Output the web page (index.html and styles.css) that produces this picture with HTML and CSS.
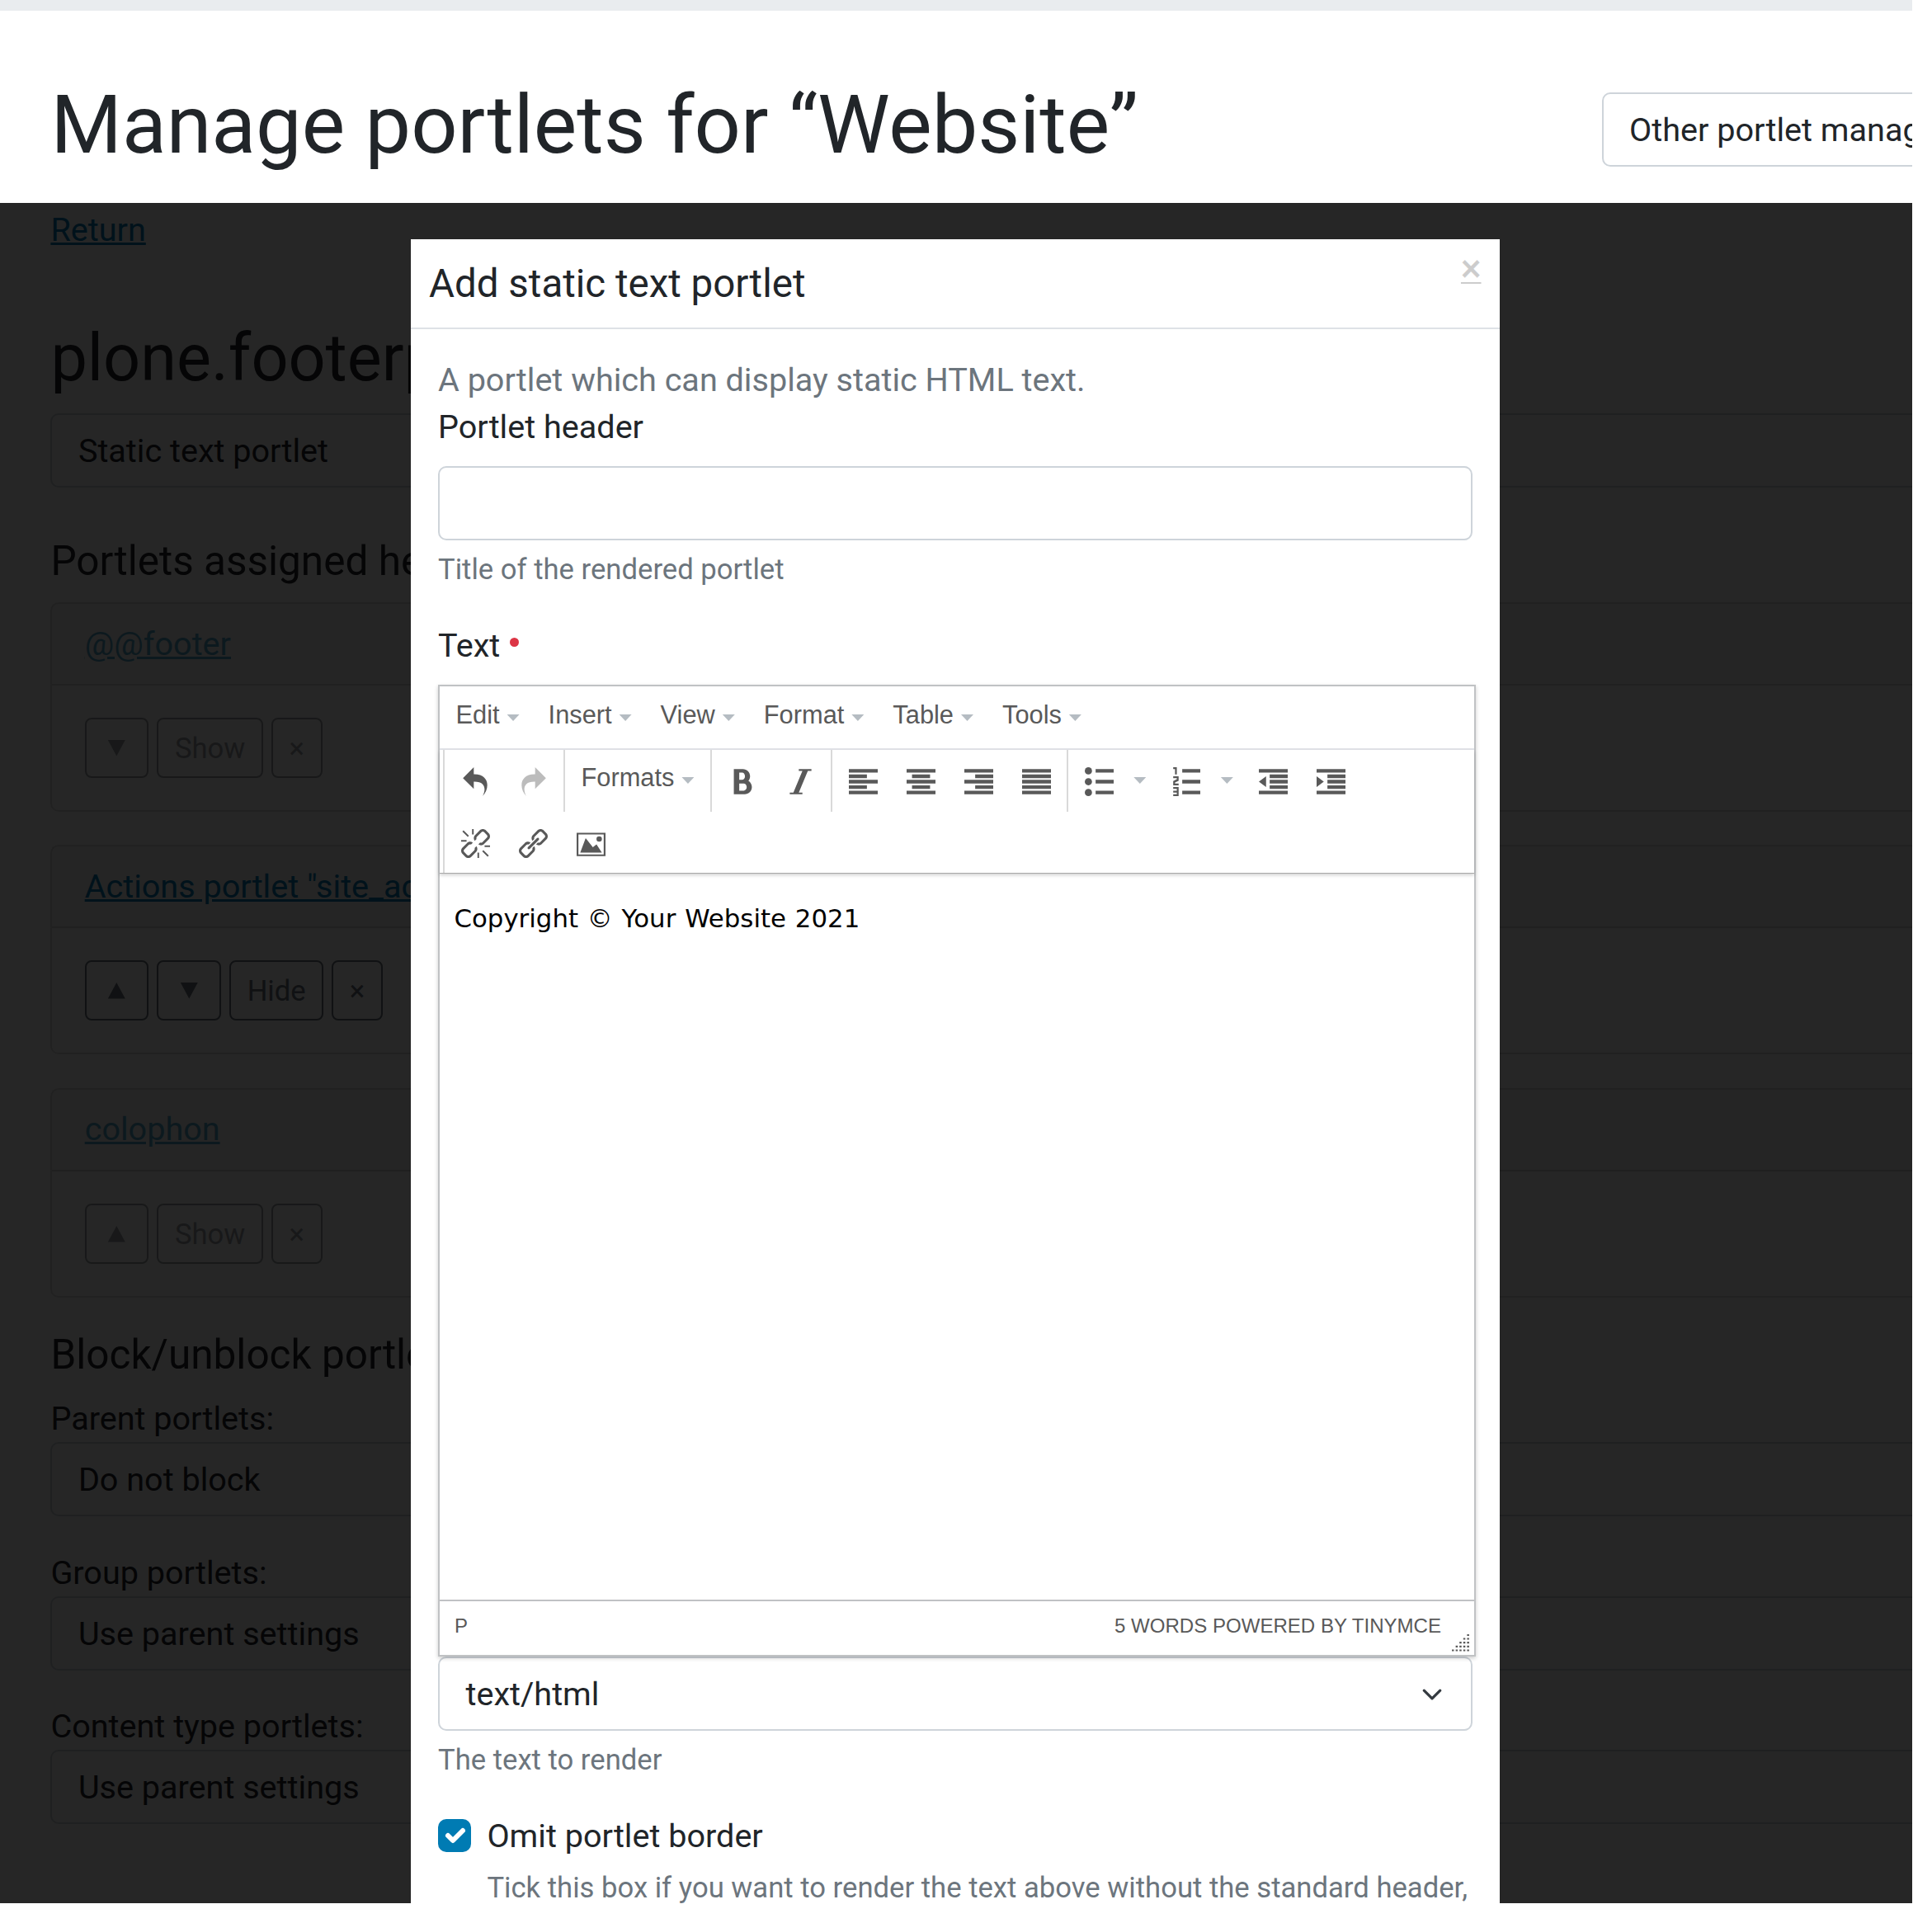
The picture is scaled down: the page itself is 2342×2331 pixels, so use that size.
FILE: index.html
```html
<!DOCTYPE html>
<html lang="en">
<head>
<meta charset="utf-8">
<title>Manage portlets</title>
<link rel="stylesheet" href="styles.css">
</head>
<body>
<svg class="defs" aria-hidden="true">
  <symbol id="undo" viewBox="0 0 1024 1024"><path d="M761.862 1024c113.726-206.032 132.888-520.306-313.862-509.824v253.824l-384-384 384-384v248.372c534.962-13.942 594.57 472.214 313.862 775.628z"/></symbol>
  <symbol id="redo" viewBox="0 0 1024 1024"><path d="M576 248.372v-248.372l384 384-384 384v-253.824c-446.75-10.482-427.588 303.792-313.86 509.824-280.712-303.414-221.1-789.57 313.86-775.628z"/></symbol>
  <symbol id="bold" viewBox="0 0 1024 1024"><path d="M707.88 484.652c37.498-44.542 60.12-102.008 60.12-164.652 0-141.16-114.842-256-256-256h-320v896h384c141.158 0 256-114.842 256-256 0-92.956-49.798-174.496-124.12-219.348zM384 192h101.5c55.968 0 101.5 57.42 101.5 128s-45.532 128-101.5 128h-101.5v-256zM543 832h-159v-256h159c58.45 0 106 57.42 106 128s-47.55 128-106 128z"/></symbol>
  <symbol id="italic" viewBox="0 0 1024 1024"><path d="M896 64v64h-128l-320 768h128v64h-448v-64h128l320-768h-128v-64z"/></symbol>
  <symbol id="left" viewBox="0 0 16 16"><path d="M0 1h16v2H0zM0 4h10v2H0zM0 7h16v2H0zM0 10h10v2H0zM0 13h16v2H0z"/></symbol>
  <symbol id="center" viewBox="0 0 16 16"><path d="M0 1h16v2H0zM3 4h10v2H3zM0 7h16v2H0zM3 10h10v2H3zM0 13h16v2H0z"/></symbol>
  <symbol id="right" viewBox="0 0 16 16"><path d="M0 1h16v2H0zM6 4h10v2H6zM0 7h16v2H0zM6 10h10v2H6zM0 13h16v2H0z"/></symbol>
  <symbol id="justify" viewBox="0 0 16 16"><path d="M0 1h16v2H0zM0 4h16v2H0zM0 7h16v2H0zM0 10h16v2H0zM0 13h16v2H0z"/></symbol>
  <symbol id="bullets" viewBox="0 0 16 16"><circle cx="2" cy="2" r="2"/><circle cx="2" cy="8" r="2"/><circle cx="2" cy="14" r="2"/><path d="M6 1h10v2H6zM6 7h10v2H6zM6 13h10v2H6z"/></symbol>
  <symbol id="numbers" viewBox="0 0 16 16"><path d="M6 1h10v2H6zM6 7h10v2H6zM6 13h10v2H6zM3 0v4H2V1H1V0zM2 8.500v.5h2v1H1V7.600l2-1v-.6H1V5h3v2.500zM4 11v5H1v-1h2v-1H1v-1h2v-1H1v-1z"/></symbol>
  <symbol id="outdent" viewBox="0 0 16 16"><path d="M0 1h16v2H0zM6 4h10v2H6zM6 7h10v2H6zM6 10h10v2H6zM0 13h16v2H0zM4 5v6L0 8z"/></symbol>
  <symbol id="indent" viewBox="0 0 16 16"><path d="M0 1h16v2H0zM6 4h10v2H6zM6 7h10v2H6zM6 10h10v2H6zM0 13h16v2H0zM0 5v6l4-3z"/></symbol>
  <symbol id="chain" viewBox="0 0 1024 1024"><path d="M476.888 675.112c4.56 9.048 6.99 19.158 6.99 29.696 0 17.616-6.744 34.06-18.992 46.308l-163.382 163.38c-12.248 12.248-28.694 18.992-46.308 18.992s-34.060-6.744-46.308-18.992l-99.382-99.382c-12.248-12.248-18.992-28.694-18.992-46.308s6.744-34.060 18.992-46.308l163.382-163.382c12.248-12.248 28.694-18.994 46.308-18.994 10.536 0 20.644 2.43 29.696 6.99l65.338-65.338c-27.87-21.41-61.44-32.16-95.034-32.16-39.986 0-79.972 15.166-110.308 45.502l-163.38 163.382c-60.67 60.67-60.67 159.948 0 220.618l99.382 99.382c30.334 30.332 70.32 45.5 110.306 45.5 39.988 0 79.974-15.168 110.308-45.502l163.382-163.38c55.82-55.82 60.238-144.298 13.344-205.346zM978.498 144.884l-99.382-99.382c-30.334-30.336-70.32-45.502-110.308-45.502-39.986 0-79.972 15.166-110.308 45.502l-163.382 163.382c-55.82 55.82-60.238 144.298-13.342 205.342l65.338-65.34c-4.558-9.05-6.988-19.16-6.988-29.694 0-17.616 6.744-34.060 18.992-46.308l163.382-163.382c12.246-12.248 28.694-18.994 46.308-18.994s34.060 6.746 46.308 18.994l99.382 99.382c12.248 12.248 18.992 28.694 18.992 46.308s-6.744 34.060-18.992 46.308l-163.38 163.382c-12.248 12.248-28.694 18.992-46.308 18.992-10.536 0-20.644-2.43-29.696-6.99l-65.338 65.338c27.872 21.41 61.44 32.16 95.034 32.16 39.988 0 79.974-15.168 110.308-45.502l163.38-163.38c60.672-60.67 60.672-159.948 0-220.618z"/></symbol>
  <symbol id="up" viewBox="0 0 34 20"><path d="M17 0l10.500 19.500h-21z"/></symbol>
  <symbol id="down" viewBox="0 0 34 20"><path d="M17 19.500l10.500-19.500h-21z"/></symbol>
</svg>
<div class="page">
  <header class="top">
    <h1>Manage portlets for “Website”</h1>
    <div class="select manager">Other portlet managers</div>
  </header>
  <main class="stage">
    <div class="content">
      <a class="return">Return</a>
      <h2>plone.footerportlets</h2>
      <div class="select">Static text portlet</div>
      <h3>Portlets assigned here</h3>
      <section class="card muted">
        <div class="card-head"><a>@@footer</a></div>
        <div class="card-body"><span class="btn"><svg><use href="#down"/></svg></span><span class="btn">Show</span><span class="btn">×</span></div>
      </section>
      <section class="card">
        <div class="card-head"><a>Actions portlet "site_actions"</a></div>
        <div class="card-body"><span class="btn"><svg><use href="#up"/></svg></span><span class="btn"><svg><use href="#down"/></svg></span><span class="btn">Hide</span><span class="btn">×</span></div>
      </section>
      <section class="card muted">
        <div class="card-head"><a>colophon</a></div>
        <div class="card-body"><span class="btn"><svg><use href="#up"/></svg></span><span class="btn">Show</span><span class="btn">×</span></div>
      </section>
      <h3 class="block-title">Block/unblock portlets</h3>
      <label>Parent portlets:</label>
      <div class="select">Do not block</div>
      <label>Group portlets:</label>
      <div class="select">Use parent settings</div>
      <label>Content type portlets:</label>
      <div class="select">Use parent settings</div>
    </div>
    <div class="backdrop"></div>
    <div class="modal">
      <div class="modal-head"><h4>Add static text portlet</h4><a class="close">×</a></div>
      <div class="modal-body">
        <p class="intro">A portlet which can display static HTML text.</p>
        <div class="field-label">Portlet header</div>
        <div class="select"></div>
        <p class="help">Title of the rendered portlet</p>
        <div class="field-label text-label">Text<i class="required"></i></div>
        <div class="editor">
          <div class="menubar">
            <span>Edit<i class="caret"></i></span><span>Insert<i class="caret"></i></span><span>View<i class="caret"></i></span><span>Format<i class="caret"></i></span><span>Table<i class="caret"></i></span><span>Tools<i class="caret"></i></span>
          </div>
          <div class="toolbar">
            <div class="row">
              <div class="group"><b><svg><use href="#undo"/></svg></b><b class="off"><svg><use href="#redo"/></svg></b></div>
              <div class="group formats"><span>Formats<i class="caret"></i></span></div>
              <div class="group"><b><svg><use href="#bold"/></svg></b><b><svg><use href="#italic"/></svg></b></div>
              <div class="group"><b><svg><use href="#left"/></svg></b><b><svg><use href="#center"/></svg></b><b><svg><use href="#right"/></svg></b><b><svg><use href="#justify"/></svg></b></div>
              <div class="group"><b class="split"><svg><use href="#bullets"/></svg><i class="caret"></i></b><b class="split"><svg><use href="#numbers"/></svg><i class="caret"></i></b><b><svg><use href="#outdent"/></svg></b><b><svg><use href="#indent"/></svg></b></div>
            </div>
            <div class="row">
              <div class="group">
                <b><svg viewBox="0 0 16 16"><use href="#chain" width="16" height="16"/><path class="ticks" d="M6.500 0v3M0 6.500h3M1 1l3 3M9.500 13v3M13 9.500h3M12 12l3 3"/></svg></b>
                <b><svg viewBox="0 0 1024 1024"><use href="#chain" width="1024" height="1024"/><path d="M320 704c17.6 17.6 47.274 16.726 65.942-1.942l316.118-316.116c18.668-18.668 19.54-48.342 1.94-65.942s-47.274-16.726-65.942 1.942l-316.116 316.116c-18.668 18.668-19.542 48.342-1.942 65.942z"/></svg></b>
                <b><svg viewBox="0 0 1024 1024"><path fill-rule="evenodd" d="M0 128v832h1024v-832zM960 896h-896v-704h896z"/><circle cx="800" cy="352" r="96"/><path d="M896 832h-768l192-512 256 320 128-96z"/></svg></b>
              </div>
            </div>
          </div>
          <div class="document">Copyright © Your Website 2021</div>
          <div class="status"><span>P</span><span class="words">5 WORDS POWERED BY TINYMCE</span>
            <svg class="grip" viewBox="0 0 21 21"><path d="M0 19.500H21M4.600 14.800H21M9.200 10.200H21M13.800 5.500H21M18.400 1H21"/></svg>
          </div>
        </div>
        <div class="select format">text/html<svg class="chevron" viewBox="0 0 16 16"><path d="M2 5l6 6 6-6"/></svg></div>
        <p class="help">The text to render</p>
        <div class="check">
          <svg class="box" viewBox="0 0 20 20"><path d="M6 10l3 3l6-6"/></svg>
          <div><div class="field-label">Omit portlet border</div>
          <p class="help">Tick this box if you want to render the text above without the standard header,</p></div>
        </div>
      </div>
    </div>
  </main>
</div>
</body>
</html>
```
FILE: styles.css
```css
* { box-sizing: border-box; }
body { margin: 0; background: #fff; }
h1, h2, h3, h4, p { margin: 0; font-weight: 400; }
.defs { display: none; }
.page {
  width: 2318px; height: 2307px; overflow: hidden;
  font: 39.6px/59px Roboto, sans-serif; color: #212529;
}
.top {
  height: 246px; border-top: 13px solid #e9ecef; padding: 79px 0 0 61.6px;
  display: flex; align-items: flex-start; white-space: nowrap;
}
.top h1 { width: 1880px; flex: none; font-size: 98.900px; line-height: 118px; }
.select {
  height: 90px; padding: 14px 31.500px; border: 2px solid #ced4da; border-radius: 10px;
  line-height: 60px; white-space: nowrap;
}
.manager { flex: none; width: 560px; margin-top: 20px; }
.stage { position: relative; height: 2061px; overflow: hidden; }
.content { width: 2500px; padding: 3px 0 0 61.400px; }
a { color: #007bb3; text-decoration: underline; }
.return { display: block; }
h2 { margin-top: 79px; margin-bottom: 19px; font-size: 79.2px; line-height: 95px; }
h3 { margin: 60px 0 20px; font-size: 49.5px; line-height: 59px; }
.card { height: 254px; margin-bottom: 40.4px; border: 2px solid rgba(0,0,0,.125); border-radius: 10px; }
.card-head { height: 99px; padding: 18.500px 39.300px; background: rgba(0,0,0,.03); border-bottom: 2px solid rgba(0,0,0,.125); }
.card-body { display: flex; gap: 9.900px; padding: 39px 39.300px; }
.btn {
  height: 73px; padding: 9px 19.600px; border: 2px solid #6c757d; border-radius: 8px;
  color: #6c757d; font-size: 34.650px; line-height: 52px;
}
.btn svg { display: block; width: 34.600px; height: 20px; margin-top: 16px; fill: currentColor; }
.muted a, .muted .btn { opacity: .65; }
.block-title { margin: 40px 0 18px; }
label { display: block; height: 58px; }
label + .select { margin-bottom: 38.500px; }
.backdrop { position: absolute; inset: 0; background: rgba(0,0,0,.85); }

.modal { position: absolute; left: 498px; top: 44px; width: 1320px; height: 2100px; background: #fff; }
.modal-head {
  display: flex; justify-content: space-between; height: 109px; padding: 26px 22.500px 0 22px;
  border-bottom: 2px solid #dee2e6;
}
h4 { font-size: 47.500px; line-height: 57px; }
.close { margin-top: -18px; font-size: 46px; line-height: 54px; color: #ccc; text-decoration-thickness: 2px; -webkit-text-stroke: .5px #ccc; }
.modal-body { padding: 32px 33px 0; }
.intro, .help { color: #6c757d; }
.intro { height: 57px; }
.field-label { height: 59px; margin-bottom: 18px; }
.help { margin-top: 9px; font-size: 34.650px; line-height: 52px; white-space: nowrap; }
.text-label { display: flex; margin-top: 37px; }
.required { width: 11px; height: 11px; margin: 20px 0 0 12px; border-radius: 50%; background: #dc3545; }

.editor {
  position: relative; width: 1258px; height: 1177.500px; border: 2px solid #c0c2c4;
  box-shadow: 0 2px 5px rgba(0,0,0,.2);
  font: 30.800px/42px "Liberation Sans", sans-serif; color: #595959;
}
.menubar { display: flex; gap: 35px; height: 77px; padding: 14px 19.500px; border-bottom: 2px solid #e2e4e9; }
.menubar span, .formats span { display: flex; gap: 9px; }
.caret {
  width: 15px; height: 8px; margin-top: 20px; background: #b5bcc2;
  clip-path: polygon(0 0, 100% 0, 50% 100%);
}
.toolbar { height: 150px; padding-left: 4px; border-bottom: 1px solid #a8a8a8; box-shadow: 0 2px 4px rgba(0,0,0,.18); }
.row { display: flex; height: 74.500px; }
.group { display: flex; padding: 0 2px; border-left: 2px solid #d9d9d9; }
.group b { width: 70px; padding: 21px 17.500px 0; }
.group svg { display: block; flex: none; width: 35px; height: 35px; fill: #595959; }
.group .off { opacity: .4; }
.group .split { display: flex; width: 105.600px; padding-right: 0; gap: 24.800px; }
.split .caret { margin-top: 12px; }
.group.formats { width: 178px; padding: 13px 19.500px; }
.ticks { stroke: #595959; stroke-width: .9; fill: none; }
.document { height: 880px; padding: 34px 17.500px; font: 30.800px/40px "DejaVu Sans", sans-serif; word-spacing: 1.100px; color: #000; }
.status {
  display: flex; justify-content: space-between; height: 66px; padding: 10px 40px 0 18px;
  border-top: 2px solid #c0c2c4; font-size: 24.060px; line-height: 40px;
}
.grip { position: absolute; right: 6px; bottom: 4px; width: 21px; height: 21px; fill: none; stroke: #595959; stroke-width: 2.200; stroke-dasharray: 2.500 2.100; }
.format { display: flex; justify-content: space-between; padding-right: 34.500px; }
.chevron { width: 26px; height: 26px; margin-top: 17px; fill: none; stroke: #343a40; stroke-width: 2; stroke-linecap: round; stroke-linejoin: round; }
.check { display: flex; gap: 19.400px; margin-top: 37.500px; }
.check .field-label { margin: 0; }
.check .help { margin-top: 7px; }
.box { flex: none; width: 40px; height: 40px; margin-top: 9px; border-radius: 10px; background: #007bb3; fill: none; stroke: #fff; stroke-width: 3; stroke-linecap: round; stroke-linejoin: round; }
```
